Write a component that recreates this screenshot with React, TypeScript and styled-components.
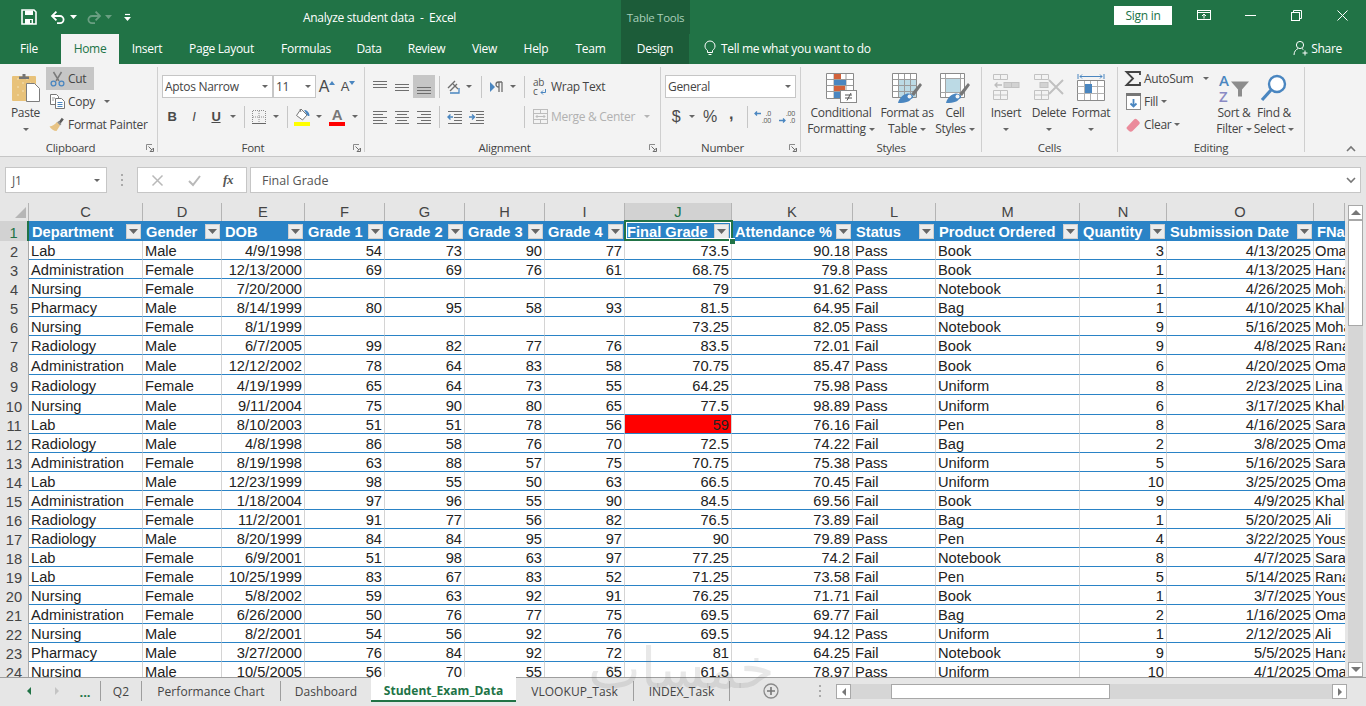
import React from "react";
import styled, { createGlobalStyle } from "styled-components";

const UI = `"Open Sans","Noto Sans",sans-serif`;
const CELL = `"Liberation Sans",Arial,sans-serif`;
const GREEN = "#217346";
const BLUE = "#4a86c0";
const GRAY = "#6e6e6e";

const Global = createGlobalStyle`
  html, body { margin: 0; padding: 0; overflow: hidden; background: #e6e6e6; }
  * { box-sizing: border-box; }
`;

const Page = styled.div`
  position: relative;
  width: 1366px;
  height: 706px;
  overflow: hidden;
  display: flex;
  flex-direction: column;
  font-family: ${UI};
  font-size: 12px;
  letter-spacing: -0.3px;
  color: #444;
  background: #e6e6e6;
`;

/* ---------- title and tabs ---------- */
const TitleRow = styled.div`
  height: 34px;
  background: ${GREEN};
  display: flex;
  align-items: center;
  color: #fff;
`;
const Qat = styled.span<{ $ml: number; $w: number }>`
  margin-left: ${(p) => p.$ml}px;
  width: ${(p) => p.$w}px;
  display: flex;
  justify-content: center;
  align-items: center;
`;
const DocTitle = styled.div`
  margin-left: 171px;
  width: 318px;
  white-space: pre;
`;
const ContextLabel = styled.div`
  width: 69px;
  height: 34px;
  background: #1c5c39;
  color: #a9cfba;
  display: flex;
  align-items: center;
  justify-content: center;
  white-space: nowrap;
  font-size: 11.5px;
`;
const SignIn = styled.div`
  margin-left: 424px;
  width: 58px;
  height: 19px;
  background: #fff;
  color: ${GREEN};
  display: flex;
  align-items: center;
  justify-content: center;
  margin-top: -3px;
`;
const WinButtons = styled.div`
  margin-left: 9px;
  display: flex;
`;
const WinBtn = styled.div`
  width: 46px;
  height: 30px;
  margin-top: -4px;
  display: flex;
  align-items: center;
  justify-content: center;
`;
const TabRow = styled.div`
  height: 30px;
  background: ${GREEN};
  display: flex;
  padding-left: 6px;
  color: #fff;
`;
const Tab = styled.div<{ $w: number; $mr?: number; $active?: boolean; $ctx?: boolean }>`
  width: ${(p) => p.$w}px;
  margin-right: ${(p) => p.$mr ?? 0}px;
  padding-bottom: 2px;
  display: flex;
  align-items: center;
  justify-content: center;
  white-space: nowrap;
  background: ${(p) => (p.$active ? "#f3f3f3" : p.$ctx ? "#1c5c39" : "transparent")};
  color: ${(p) => (p.$active ? GREEN : "#fff")};
`;
const TellMe = styled.div`
  margin-left: 15px;
  padding-bottom: 2px;
  display: flex;
  align-items: center;
  gap: 5px;
`;
const Share = styled.div`
  margin-left: auto;
  padding: 0 24px 2px 0;
  display: flex;
  align-items: center;
  gap: 2px;
`;

/* ---------- ribbon ---------- */
const Ribbon = styled.div`
  height: 93px;
  background: #f3f3f3;
  border-bottom: 1px solid #c6c6c6;
  display: flex;
  padding-top: 3px;
  position: relative;
`;
const Group = styled.div<{ $w: number }>`
  width: ${(p) => p.$w}px;
  height: 85px;
  border-right: 1px solid #cfcfcf;
  display: flex;
  flex-direction: column;
  position: relative;
`;
const GroupBody = styled.div<{ $pl?: number; $dir?: string }>`
  height: 73px;
  padding-left: ${(p) => p.$pl ?? 0}px;
  display: flex;
  flex-direction: ${(p) => p.$dir ?? "row"};
`;
const GroupLabel = styled.div<{ $launch?: boolean }>`
  height: 12px;
  line-height: 16px;
  text-align: center;
  white-space: nowrap;
  font-size: 11.5px;
  padding-right: ${(p) => (p.$launch ? 16 : 0)}px;
`;
const Launcher = styled.span`
  position: absolute;
  right: 3px;
  bottom: 0px;
  display: flex;
`;
const ToolRow = styled.div<{ $mt: number; $ml?: number; $h?: number }>`
  margin-top: ${(p) => p.$mt}px;
  margin-left: ${(p) => p.$ml ?? 0}px;
  height: ${(p) => p.$h ?? 23}px;
  display: flex;
  align-items: center;
`;
const Slot = styled.span<{ $w: number; $on?: boolean; $ml?: number }>`
  width: ${(p) => p.$w}px;
  margin-left: ${(p) => p.$ml ?? 0}px;
  height: 23px;
  flex: none;
  display: flex;
  align-items: center;
  justify-content: center;
  background: ${(p) => (p.$on ? "#c6c6c6" : "transparent")};
`;
const VSep = styled.span<{ $ml?: number; $mr?: number }>`
  width: 1px;
  height: 22px;
  flex: none;
  margin-left: ${(p) => p.$ml ?? 0}px;
  margin-right: ${(p) => p.$mr ?? 0}px;
  background: #c6c6c6;
`;
const Caret = styled.i<{ $ml?: number; $dim?: boolean }>`
  display: inline-block;
  flex: none;
  margin-left: ${(p) => p.$ml ?? 0}px;
  width: 0;
  height: 0;
  border-left: 3.5px solid transparent;
  border-right: 3.5px solid transparent;
  border-top: 3.5px solid ${(p) => (p.$dim ? "#b4b4b4" : "#666")};
`;
const Combo = styled.div<{ $w: number }>`
  width: ${(p) => p.$w}px;
  height: 23px;
  flex: none;
  background: #fff;
  border: 1px solid #c6c6c6;
  display: flex;
  align-items: center;
  padding: 0 4px 0 2px;
  justify-content: space-between;
  white-space: nowrap;
`;
const SmallColumn = styled.div<{ $w: number; $pl?: number }>`
  width: ${(p) => p.$w}px;
  padding-left: ${(p) => p.$pl ?? 0}px;
  display: flex;
  flex-direction: column;
  flex: none;
`;
const SmallBtn = styled.div<{ $on?: boolean; $w?: number }>`
  height: 23px;
  width: ${(p) => (p.$w ? `${p.$w}px` : "auto")};
  display: flex;
  align-items: center;
  white-space: nowrap;
  background: ${(p) => (p.$on ? "#c6c6c6" : "transparent")};
`;
const SmallIcon = styled.span<{ $w?: number }>`
  width: ${(p) => p.$w ?? 22}px;
  flex: none;
  display: flex;
  justify-content: center;
  align-items: center;
`;
const Large = styled.div<{ $w: number; $mr?: number }>`
  width: ${(p) => p.$w}px;
  margin-right: ${(p) => p.$mr ?? 0}px;
  flex: none;
  padding-top: 3px;
  display: flex;
  flex-direction: column;
  align-items: center;
  white-space: nowrap;
  line-height: 16px;
`;
const LargeIcon = styled.span`
  height: 35px;
  display: flex;
  align-items: center;
  justify-content: center;
`;
const LargeLine = styled.span`
  height: 16px;
  display: flex;
  align-items: center;
  gap: 3px;
`;
const FaceLetter = styled.span<{ $b?: boolean; $i?: boolean; $u?: boolean; $size?: number; $mb?: number }>`
  font-family: ${CELL};
  font-size: ${(p) => p.$size ?? 13}px;
  font-weight: ${(p) => (p.$b ? 700 : 400)};
  font-style: ${(p) => (p.$i ? "italic" : "normal")};
  text-decoration: ${(p) => (p.$u ? "underline" : "none")};
  margin-bottom: ${(p) => p.$mb ?? 0}px;
  color: #4a4a4a;
`;
const Disabled = styled.span`
  color: #b1b1b1;
  white-space: nowrap;
  margin-left: 1px;
`;
const WrapLabel = styled.span`
  margin-left: 1px;
  white-space: nowrap;
`;
const Collapse = styled.span`
  position: absolute;
  right: 10px;
  bottom: 4px;
  display: flex;
`;

/* ---------- formula bar ---------- */
const FormulaRow = styled.div`
  height: 46px;
  padding: 10px 5px 10px 5px;
  display: flex;
  align-items: stretch;
  background: #e6e6e6;
`;
const NameBox = styled.div`
  width: 102px;
  background: #fff;
  border: 1px solid #c6c6c6;
  display: flex;
  align-items: center;
  justify-content: space-between;
  padding: 0 6px 0 6px;
  color: #555;
`;
const Grip = styled.div`
  width: 30px;
  display: flex;
  align-items: center;
  justify-content: center;
`;
const FxBox = styled.div`
  width: 110px;
  background: #fff;
  border: 1px solid #c6c6c6;
  display: flex;
  align-items: center;
`;
const FxSlot = styled.span<{ $w: number }>`
  width: ${(p) => p.$w}px;
  display: flex;
  justify-content: center;
`;
const FxGlyph = styled.span`
  font-family: "Liberation Serif", serif;
  font-style: italic;
  font-weight: 700;
  font-size: 13px;
  color: #555;
`;
const FormulaInput = styled.div`
  margin-left: 3px;
  flex: 1;
  background: #fff;
  border: 1px solid #c6c6c6;
  display: flex;
  align-items: center;
  justify-content: space-between;
  padding: 0 4px 0 11px;
  font-size: 12.5px;
  letter-spacing: 0;
  color: #555;
`;

/* ---------- sheet ---------- */
const COLS = "29px 114px 79px 83px 80px 80px 80px 80px 107px 121px 83px 144px 87px 147px 31px";

const SheetArea = styled.div`
  height: 475px;
  display: flex;
  border-bottom: 1px solid #9e9e9e;
`;
const Grid = styled.div`
  width: 1345px;
  overflow: hidden;
  background: #fff;
  font-family: ${CELL};
  font-size: 14.67px;
  letter-spacing: 0;
  color: #222;
`;
const ColHeadRow = styled.div`
  height: 18px;
  display: grid;
  grid-template-columns: ${COLS};
  background: #e6e6e6;
`;
const ColHead = styled.div<{ $sel?: boolean }>`
  display: flex;
  align-items: center;
  justify-content: center;
  line-height: 18px;
  color: ${(p) => (p.$sel ? GREEN : "#444")};
  background: ${(p) => (p.$sel ? "#d2d2d2" : "transparent")};
  border-right: 1px solid #b4b4b4;
  position: relative;
  overflow: hidden;
`;
const Corner = styled.span`
  position: absolute;
  left: 15px;
  top: 4px;
  width: 0;
  height: 0;
  border-left: 11px solid transparent;
  border-bottom: 11px solid #b6b6b6;
`;
const Row = styled.div<{ $h: number }>`
  height: ${(p) => p.$h}px;
  display: grid;
  grid-template-columns: ${COLS};
`;
const RowHead = styled.div<{ $sel?: boolean }>`
  background: ${(p) => (p.$sel ? "#d2d2d2" : "#e6e6e6")};
  border-right: ${(p) => (p.$sel ? `2px solid ${GREEN}` : "1px solid #a8a8a8")};
  color: ${(p) => (p.$sel ? GREEN : "#444")};
  display: flex;
  align-items: flex-end;
  justify-content: center;
  line-height: 16px;
`;
const Cell = styled.div<{ $right?: boolean; $red?: boolean; $open?: boolean }>`
  border-right: ${(p) => (p.$open ? "none" : "1px solid #d4d4d4")};
  border-bottom: 1px solid #2a83c6;
  background: ${(p) => (p.$red ? "#ff0000" : "#fff")};
  display: flex;
  align-items: flex-end;
  justify-content: ${(p) => (p.$right ? "flex-end" : "flex-start")};
  padding: ${(p) => (p.$open ? "0 0 0 1px" : "0 2px")};
  line-height: 15px;
  white-space: nowrap;
  overflow: hidden;
`;
const HeadCell = styled.div<{ $sel?: boolean }>`
  background: #2a83c6;
  color: #fff;
  font-weight: 700;
  display: flex;
  align-items: center;
  justify-content: space-between;
  padding: ${(p) => (p.$sel ? "1px 2px 0 2px" : "1px 1px 0 3px")};
  white-space: nowrap;
  position: relative;
  overflow: ${(p) => (p.$sel ? "visible" : "hidden")};
  z-index: ${(p) => (p.$sel ? 2 : 0)};
`;
const FilterBtn = styled.span`
  width: 15px;
  height: 15px;
  flex: none;
  margin-right: 1px;
  margin-top: -1px;
  background: #ececec;
  border: 1px solid #d0d0d0;
  display: flex;
  align-items: center;
  justify-content: center;
`;
const SelectBox = styled.span`
  position: absolute;
  inset: -1px -1px 0 -1px;
  border: 2px solid ${GREEN};
  pointer-events: none;
  &::after {
    content: "";
    position: absolute;
    inset: 0;
    border: 1px solid #fff;
  }
`;
const Handle = styled.span`
  position: absolute;
  right: -3px;
  bottom: -3px;
  width: 6px;
  height: 6px;
  background: ${GREEN};
  border: 1px solid #fff;
  border-width: 1px 0 0 1px;
`;
const VScroll = styled.div`
  width: 21px;
  padding: 2px 3px 0 3px;
  display: flex;
  flex-direction: column;
  background: #e6e6e6;
`;
const ScrollBtn = styled.div`
  height: 15px;
  flex: none;
  background: #fff;
  border: 1px solid #a8a8a8;
  display: flex;
  align-items: center;
  justify-content: center;
`;
const VThumb = styled.div`
  height: 106px;
  flex: none;
  background: #fff;
  border: 1px solid #a8a8a8;
`;
const VTrack = styled.div`
  flex: 1;
  background: #d6d6d6;
`;
const ArrowUp = styled.i<{ $dir: "up" | "down" }>`
  width: 0;
  height: 0;
  border-left: 5px solid transparent;
  border-right: 5px solid transparent;
  border-${(p) => (p.$dir === "up" ? "bottom" : "top")}: 5px solid #777;
`;
const ArrowSide = styled.i<{ $dir: "left" | "right"; $color?: string; $size?: number }>`
  width: 0;
  height: 0;
  border-top: ${(p) => p.$size ?? 4}px solid transparent;
  border-bottom: ${(p) => p.$size ?? 4}px solid transparent;
  border-${(p) => (p.$dir === "left" ? "right" : "left")}: ${(p) => p.$size ?? 4}px solid ${(p) => p.$color ?? "#777"};
`;

/* ---------- sheet tabs ---------- */
const TabsBar = styled.div`
  flex: 1;
  display: flex;
  padding-left: 15px;
  background: #e6e6e6;
`;
const TabNav = styled.span<{ $w: number; $ml?: number; $h?: number }>`
  width: ${(p) => p.$w}px;
  margin-left: ${(p) => p.$ml ?? 0}px;
  height: ${(p) => p.$h ?? 26}px;
  flex: none;
  display: flex;
  align-items: center;
  justify-content: center;
  white-space: nowrap;
`;
const Dots = styled.b`
  color: ${GREEN};
  font-size: 13px;
  letter-spacing: 0;
  padding-top: 2px;
`;
const SheetSep = styled.span<{ $ml?: number }>`
  width: 1px;
  height: 20px;
  margin-top: 3px;
  flex: none;
  margin-left: ${(p) => p.$ml ?? 0}px;
  background: #9e9e9e;
`;
const SheetTab = styled.span<{ $w: number; $active?: boolean }>`
  width: ${(p) => p.$w}px;
  flex: none;
  height: ${(p) => (p.$active ? 25 : 24)}px;
  margin-top: ${(p) => (p.$active ? -1 : 0)}px;
  padding-top: ${(p) => (p.$active ? 3 : 2)}px;
  display: flex;
  align-items: center;
  justify-content: center;
  white-space: nowrap;
  letter-spacing: 0.05px;
  color: ${(p) => (p.$active ? GREEN : "#444")};
  font-weight: ${(p) => (p.$active ? 700 : 400)};
  background: ${(p) => (p.$active ? "#fff" : "transparent")};
  border-bottom: ${(p) => (p.$active ? `2px solid ${GREEN}` : "none")};
`;
const HBar = styled.div`
  margin-left: 7px;
  margin-top: 6px;
  height: 15px;
  display: flex;
`;
const HBtn = styled.div`
  width: 15px;
  background: #fff;
  border: 1px solid #a8a8a8;
  display: flex;
  align-items: center;
  justify-content: center;
`;
const HTrack = styled.div<{ $w: number }>`
  width: ${(p) => p.$w}px;
  background: #d6d6d6;
`;
const HThumb = styled.div`
  width: 219px;
  background: #fff;
  border: 1px solid #a8a8a8;
`;
const Watermark = styled.div`
  position: absolute;
  left: 588px;
  top: 636px;
  font-family: "DejaVu Sans", "Noto Sans", sans-serif;
  font-size: 56px;
  line-height: 66px;
  letter-spacing: 0;
  color: rgba(110, 110, 110, 0.16);
  pointer-events: none;
  z-index: 5;
`;

/* ---------- drawn icons ---------- */
type Sz = { w: number; h: number; children: React.ReactNode };
const Svg = ({ w, h, children }: Sz) => (
  <svg width={w} height={h} viewBox={`0 0 ${w} ${h}`} fill="none" style={{ display: "block", flex: "none", overflow: "visible" }}>
    {children}
  </svg>
);

const SaveIcon = () => (
  <Svg w={16} h={16}>
    <path d="M1 1h12l2 2v12H1z" stroke="#fff" strokeWidth="1.6" />
    <path d="M4 1.5h8V6H4z" fill="#fff" />
    <path d="M4 10h8v5H4z" fill="#fff" />
    <path d="M9 11h1.6v3H9z" fill={GREEN} />
  </Svg>
);
const UndoIcon = ({ c = "#fff" }: { c?: string }) => (
  <Svg w={15} h={15}>
    <path d="M2.5 6H10a3.6 3.6 0 0 1 0 7.2H7" stroke={c} strokeWidth="1.8" />
    <path d="M6.4 1.6 2 6l4.4 4.4" stroke={c} strokeWidth="1.8" />
  </Svg>
);
const RedoIcon = () => (
  <Svg w={15} h={15}>
    <path d="M12.5 6H5a3.6 3.6 0 0 0 0 7.2h3" stroke="#6a9f82" strokeWidth="1.8" />
    <path d="M8.6 1.6 13 6l-4.4 4.4" stroke="#6a9f82" strokeWidth="1.8" />
  </Svg>
);
const CustomizeIcon = () => (
  <Svg w={9} h={9}>
    <path d="M2 1.5h5" stroke="#fff" strokeWidth="1.2" />
    <path d="M1 4h7L4.5 8z" fill="#fff" />
  </Svg>
);
const SmallCaretWhite = ({ dim }: { dim?: boolean }) => (
  <Svg w={7} h={4}>
    <path d="M0 0h7L3.5 4z" fill={dim ? "#6a9f82" : "#fff"} />
  </Svg>
);
const DisplayOpts = () => (
  <Svg w={14} h={10}>
    <rect x=".5" y=".5" width="13" height="9" stroke="#fff" />
    <path d="M.5 2.5h13" stroke="#fff" />
    <path d="M7 8.5V4.5M5 6l2-2 2 2" stroke="#fff" />
  </Svg>
);
const MinIcon = () => (
  <Svg w={11} h={11}>
    <path d="M0 5.5h11" stroke="#fff" />
  </Svg>
);
const RestoreIcon = () => (
  <Svg w={11} h={11}>
    <rect x=".5" y="2.5" width="8" height="8" stroke="#fff" />
    <path d="M2.5 2.5v-2h8v8h-2" stroke="#fff" />
  </Svg>
);
const CloseIcon = () => (
  <Svg w={11} h={11}>
    <path d="M.5.5l10 10M10.5.5l-10 10" stroke="#fff" />
  </Svg>
);
const BulbIcon = () => (
  <Svg w={12} h={16}>
    <path d="M3.5 10.5C2 9.4 1 8 1 6a5 5 0 0 1 10 0c0 2-1 3.4-2.5 4.5v2h-5z" stroke="#fff" />
    <path d="M4.5 14.5h3" stroke="#fff" />
  </Svg>
);
const ShareIcon = () => (
  <Svg w={16} h={16}>
    <circle cx="7" cy="5" r="3.6" stroke="#fff" />
    <path d="M1 15c0-3.5 2-5.5 4-6.4M9 8.6c.5.2 1 .5 1.4.9" stroke="#fff" />
    <path d="M12 10.5v5M9.5 13h5" stroke="#fff" />
  </Svg>
);
const LauncherIcon = () => (
  <Svg w={8} h={8}>
    <path d="M.5 6V.5H6" stroke="#8a8a8a" />
    <path d="M2.5 2.5l3.5 3.5M7.5 4v3.5H4z" stroke="#6e6e6e" />
  </Svg>
);
const PasteIcon = () => (
  <Svg w={30} h={30}>
    <rect x="1" y="3" width="24" height="25" rx="1" fill="#e8c27a" />
    <path d="M6 6h2M11 10h2M6 14h2M11 18h2M6 22h2M15 6h2M19 10h1" stroke="#f6e3b8" />
    <path d="M8 6V3.5h3.5V1h3v2.5H18V6z" fill="#757575" />
    <path d="M15.5 10.5h8l5 5v13h-13z" fill="#fff" stroke="#7d7d7d" />
  </Svg>
);
const ScissorsIcon = () => (
  <Svg w={15} h={16}>
    <path d="M3.5 1l5.5 9M11.5 1L6 10" stroke="#7a7a7a" strokeWidth="1.5" />
    <circle cx="3.5" cy="12.5" r="2.4" stroke={BLUE} strokeWidth="1.3" />
    <circle cx="11.5" cy="12.5" r="2.4" stroke={BLUE} strokeWidth="1.3" />
  </Svg>
);
const CopyIcon = () => (
  <Svg w={15} h={15}>
    <path d="M.5.5h6l2 2v8H.5z" fill="#fff" stroke="#777" />
    <path d="M5.5 4.5h6l3 3v7h-9z" fill="#fff" stroke="#777" />
    <path d="M7.5 8.5h5M7.5 10.5h5M7.5 12.5h5" stroke={BLUE} />
    <path d="M2 4h3M2 6h2" stroke="#999" />
  </Svg>
);
const PainterIcon = () => (
  <Svg w={16} h={15}>
    <path d="M10 4.5l2.8-3.7 2 1.7L11.6 6.5z" fill="#5b5b5b" />
    <path d="M9.5 4l3 3-1.5 1.5-3-3z" fill="#8a8a8a" />
    <path d="M7.8 5L11 8.5 7.5 14C5 14 2 12 .5 9.5c3-.2 5.5-2 7.3-4.5z" fill="#e7c384" />
  </Svg>
);
const GrowIcon = ({ down }: { down?: boolean }) => (
  <Svg w={6} h={12}>
    <path d={down ? "M0 0h6L3 4z" : "M0 4h6L3 0z"} fill={BLUE} />
  </Svg>
);
const BorderIcon = () => (
  <Svg w={14} h={14}>
    <path d="M.5 1v12M13.5 1v12M7 1v12M1 .5h12M1 7h12" stroke="#8c8c8c" strokeDasharray="1 1" />
    <path d="M0 13.5h14" stroke="#666" />
  </Svg>
);
const FillIcon = () => (
  <Svg w={17} h={18}>
    <path d="M7 1l6 6-4.5 5L2.5 7.5z" fill="#fff" stroke="#777" />
    <path d="M7 4L6 1" stroke="#777" />
    <path d="M10 2c3 0 5 2 5.5 5 .2 1-1 1.5-2 .5z" fill={BLUE} />
    <rect x="0" y="14" width="16" height="4" fill="#ffff00" />
  </Svg>
);
const ColorA = () => (
  <Svg w={16} h={18}>
    <text x="8" y="12" textAnchor="middle" fontFamily={CELL} fontSize="15" fontWeight="700" fill="#777">
      A
    </text>
    <rect x="0" y="14" width="16" height="4" fill="#ff0000" />
  </Svg>
);
const LinesIcon = ({ l, arrow }: { l: [number, number, number][]; arrow?: "in" | "out" }) => (
  <Svg w={16} h={14}>
    {l.map(([a, b, y], i) => (
      <path key={i} d={`M${a} ${y}.5H${b}`} stroke={GRAY} />
    ))}
    {arrow === "out" && <path d="M6 7H1M3.5 4.5 1 7l2.5 2.5" stroke={BLUE} strokeWidth="1.4" />}
    {arrow === "in" && <path d="M0 7h5M3 4.5 5.5 7 3 9.5" stroke={BLUE} strokeWidth="1.4" />}
  </Svg>
);
const OrientIcon = () => (
  <Svg w={17} h={16}>
    <path d="M2 9l7-7M4 12l7-7" stroke={GRAY} strokeWidth="1.4" />
    <path d="M7 5l5 5" stroke={GRAY} strokeWidth="1.2" />
    <path d="M13 9v5H8M4 14h9" stroke={BLUE} strokeWidth="1.3" />
  </Svg>
);
const RtlIcon = () => (
  <Svg w={16} h={12}>
    <path d="M1 1l5 5-5 5z" fill={BLUE} />
    <path d="M10 11V1M13 11V1M13 1H9.5a2.5 2.5 0 0 0 0 5H10" stroke={GRAY} strokeWidth="1.3" />
  </Svg>
);
const WrapIcon = () => (
  <Svg w={14} h={18}>
    <text x="0" y="8" fontFamily={UI} fontSize="10" fill="#555">ab</text>
    <text x="0" y="17" fontFamily={UI} fontSize="10" fill="#555">c</text>
    <path d="M12.5 11v3.5H8M10 12.5l-2 2 2 2" stroke={BLUE} />
  </Svg>
);
const MergeIcon = () => (
  <Svg w={15} h={15}>
    <rect x=".5" y=".5" width="14" height="14" stroke="#bdbdbd" />
    <path d="M.5 4.5h14M.5 10.5h14M7.5.5v4M7.5 10.5v4M3 7.5h9M4.5 6 3 7.5 4.5 9M10.5 6 12 7.5 10.5 9" stroke="#bdbdbd" />
  </Svg>
);
const DecimalIcon = ({ inc }: { inc?: boolean }) => (
  <Svg w={17} h={14}>
    <path d={inc ? "M7 3.5H1M3 1.5 1 3.5l2 2" : "M1 10.5h6M5 8.5l2 2-2 2"} stroke={BLUE} strokeWidth="1.3" />
    <text x="17" y="5.5" textAnchor="end" fontFamily={UI} fontSize="7" fill="#555">{inc ? ".0" : ".00"}</text>
    <text x="17" y="13" textAnchor="end" fontFamily={UI} fontSize="7" fill="#555">{inc ? ".00" : ".0"}</text>
  </Svg>
);
const CondIcon = () => (
  <Svg w={31} h={30}>
    <path d="M.5.5h27v25H.5z" fill="#fff" stroke="#8a8a8a" />
    <path d="M.5 6.5h27M.5 12.5h27M.5 18.5h27M8 1v24M20 1v24" stroke="#9b9b9b" />
    <rect x="8" y="1" width="7" height="5" fill="#d2623b" />
    <rect x="8" y="7" width="12" height="5" fill={BLUE} />
    <rect x="8" y="13" width="11" height="5" fill="#d2623b" />
    <rect x="8" y="19" width="6" height="6" fill={BLUE} />
    <rect x="14.5" y="17.5" width="16" height="12" fill="#fff" stroke="#8a8a8a" />
    <path d="M19 22h7M19 25h7M25 20l-4 7.5" stroke="#555" />
  </Svg>
);
const Brush = () => (
  <>
    <path d="M19 21l9-11 2 2-8 11z" fill="#777" />
    <path d="M6 30c1-4 4-8 8-9 3-1 6 0 7 2 .5 2-1 3-2 3-1 2-4 4-13 4z" fill={BLUE} />
    <circle cx="17.5" cy="23.5" r="2" fill="#f3f3f3" />
  </>
);
const TableStyleIcon = () => (
  <Svg w={31} h={30}>
    <path d="M.5.5h24v24H.5z" fill="#fff" stroke="#8a8a8a" />
    <rect x="7" y="7" width="17" height="17" fill="#bcdae5" />
    <path d="M.5 6.5h24M.5 12.5h24M.5 18.5h24M6.5 1v23M12.5 1v23M18.5 1v23" stroke="#9b9b9b" />
    <Brush />
  </Svg>
);
const CellStyleIcon = () => (
  <Svg w={31} h={30}>
    <path d="M.5.5h24v24H.5z" fill="#fff" stroke="#8a8a8a" />
    <rect x="6" y="6" width="14" height="13" fill="#bcdae5" />
    <path d="M.5 5.5h24M.5 19.5h24M5.5 1v23M20.5 1v23" stroke="#a5a5a5" />
    <Brush />
  </Svg>
);
const CellsBase = () => (
  <>
    <path d="M.5.5h14v5H.5zM7.5.5v5M.5 16.5h14v9H.5zM.5 21h14M7.5 16.5v9" stroke="#c2c2c2" />
  </>
);
const InsertCells = () => (
  <Svg w={27} h={27}>
    <CellsBase />
    <rect x="11" y="8.5" width="15" height="5" fill="#d2d2d2" stroke="#c2c2c2" />
    <path d="M18.5 8.5v5" stroke="#c2c2c2" />
    <path d="M9 11H2M4.5 8.5 2 11l2.5 2.5" stroke="#bcbcbc" strokeWidth="1.3" />
  </Svg>
);
const DeleteCells = () => (
  <Svg w={31} h={27}>
    <CellsBase />
    <rect x="6" y="8.5" width="8" height="5" fill="#d2d2d2" stroke="#c2c2c2" />
    <path d="M15 6l14 14M29 6L15 20" stroke="#c0c0c0" strokeWidth="2" />
  </Svg>
);
const FormatCells = () => (
  <Svg w={29} h={30}>
    <path d="M1 1v5M27 1v5M3 3.5h22M5 1.5 3 3.5l2 2M23 1.5l2 2-2 2" stroke={BLUE} />
    <path d="M.5 7.5h27v20H.5z" fill="#fff" stroke="#8a8a8a" />
    <path d="M.5 13.5h27M.5 20.5h27M7.5 8v19M13.5 8v19M20.5 8v19" stroke="#b3b3b3" />
    <rect x="8" y="11" width="7" height="9" fill={BLUE} />
  </Svg>
);
const SigmaIcon = () => (
  <Svg w={16} h={15}>
    <path d="M15 4V1H1.5L8 7.5 1.5 14H15v-3" stroke="#444" strokeWidth="1.8" />
  </Svg>
);
const FillDown = () => (
  <Svg w={15} h={17}>
    <rect x=".5" y=".5" width="14" height="16" fill="#fff" stroke="#8a8a8a" />
    <rect x="0" y="0" width="15" height="3" fill="#777" />
    <path d="M7.5 6v8M4.5 10.5l3 3 3-3" stroke={BLUE} strokeWidth="1.8" />
  </Svg>
);
const EraserIcon = () => (
  <Svg w={14} h={14}>
    <path d="M1 9l7-7.5c1-1 2-1 3 0l2 2c1 1 1 2 0 3L6.5 13c-1 1-2.5 1-3.5 0L1 11c-.6-.6-.6-1.4 0-2z" fill="#eb8b9b" />
  </Svg>
);
const SortIcon = () => (
  <Svg w={32} h={30}>
    <text x="1" y="13" fontFamily={UI} fontWeight="600" fontSize="15" fill={BLUE}>A</text>
    <text x="1" y="29" fontFamily={UI} fontWeight="600" fontSize="15" fill="#8a8ac4">Z</text>
    <path d="M13 8.5h18l-7 8v7h-4v-7z" fill="#8c8c8c" />
  </Svg>
);
const FindIcon = () => (
  <Svg w={28} h={30}>
    <circle cx="17" cy="11" r="8" fill="#fff" stroke={BLUE} strokeWidth="2.4" />
    <path d="M11 17L2 27" stroke={BLUE} strokeWidth="3.2" />
  </Svg>
);
const ChevronUp = () => (
  <Svg w={10} h={6}>
    <path d="M1 5l4-4 4 4" stroke="#777" strokeWidth="1.6" />
  </Svg>
);
const ChevronDown = () => (
  <Svg w={10} h={6}>
    <path d="M1 1l4 4 4-4" stroke="#777" strokeWidth="1.6" />
  </Svg>
);
const GripIcon = () => (
  <Svg w={3} h={12}>
    <path d="M0 0h2v2H0zM0 5h2v2H0zM0 10h2v2H0z" fill="#aaa" />
  </Svg>
);
const CancelIcon = () => (
  <Svg w={11} h={11}>
    <path d="M.5.5l10 10M10.5.5l-10 10" stroke="#b9b9b9" strokeWidth="1.5" />
  </Svg>
);
const EnterIcon = () => (
  <Svg w={13} h={11}>
    <path d="M1 6l4 4 7-9" stroke="#b9b9b9" strokeWidth="2" />
  </Svg>
);
const PlusCircle = () => (
  <Svg w={16} h={16}>
    <circle cx="8" cy="8" r="7" stroke="#8a8a8a" strokeWidth="1.3" />
    <path d="M8 4v8M4 8h8" stroke="#777" strokeWidth="1.6" />
  </Svg>
);
const FilterArrow = () => (
  <Svg w={9} h={5}>
    <path d="M0 0h9L4.5 5z" fill="#666" />
  </Svg>
);

/* ---------- data ---------- */
type Rec = [string, string, string, string, string, string, string, string, string, string, string, string, string, string];
const rows: Rec[] = [
  ["Lab", "Male", "4/9/1998", "54", "73", "90", "77", "73.5", "90.18", "Pass", "Book", "3", "4/13/2025", "Omar"],
  ["Administration", "Female", "12/13/2000", "69", "69", "76", "61", "68.75", "79.8", "Pass", "Book", "1", "4/13/2025", "Hana"],
  ["Nursing", "Female", "7/20/2000", "", "", "", "", "79", "91.62", "Pass", "Notebook", "1", "4/26/2025", "Mohamed"],
  ["Pharmacy", "Male", "8/14/1999", "80", "95", "58", "93", "81.5", "64.95", "Fail", "Bag", "1", "4/10/2025", "Khaled"],
  ["Nursing", "Female", "8/1/1999", "", "", "", "", "73.25", "82.05", "Pass", "Notebook", "9", "5/16/2025", "Mohamed"],
  ["Radiology", "Male", "6/7/2005", "99", "82", "77", "76", "83.5", "72.01", "Fail", "Book", "9", "4/8/2025", "Rana"],
  ["Administration", "Male", "12/12/2002", "78", "64", "83", "58", "70.75", "85.47", "Pass", "Book", "6", "4/20/2025", "Omar"],
  ["Radiology", "Female", "4/19/1999", "65", "64", "73", "55", "64.25", "75.98", "Pass", "Uniform", "8", "2/23/2025", "Lina"],
  ["Nursing", "Male", "9/11/2004", "75", "90", "80", "65", "77.5", "98.89", "Pass", "Uniform", "6", "3/17/2025", "Khaled"],
  ["Lab", "Male", "8/10/2003", "51", "51", "78", "56", "59", "76.16", "Fail", "Pen", "8", "4/16/2025", "Sara"],
  ["Radiology", "Male", "4/8/1998", "86", "58", "76", "70", "72.5", "74.22", "Fail", "Bag", "2", "3/8/2025", "Omar"],
  ["Administration", "Female", "8/19/1998", "63", "88", "57", "75", "70.75", "75.38", "Pass", "Uniform", "5", "5/16/2025", "Sara"],
  ["Lab", "Male", "12/23/1999", "98", "55", "50", "63", "66.5", "70.45", "Fail", "Uniform", "10", "3/25/2025", "Omar"],
  ["Administration", "Female", "1/18/2004", "97", "96", "55", "90", "84.5", "69.56", "Fail", "Book", "9", "4/9/2025", "Khaled"],
  ["Radiology", "Female", "11/2/2001", "91", "77", "56", "82", "76.5", "73.89", "Fail", "Bag", "1", "5/20/2025", "Ali"],
  ["Radiology", "Male", "8/20/1999", "84", "84", "95", "97", "90", "79.89", "Pass", "Pen", "4", "3/22/2025", "Youssef"],
  ["Lab", "Female", "6/9/2001", "51", "98", "63", "97", "77.25", "74.2", "Fail", "Notebook", "8", "4/7/2025", "Sara"],
  ["Lab", "Female", "10/25/1999", "83", "67", "83", "52", "71.25", "73.58", "Fail", "Pen", "5", "5/14/2025", "Rana"],
  ["Nursing", "Female", "5/8/2002", "59", "63", "92", "91", "76.25", "71.71", "Fail", "Book", "1", "3/7/2025", "Youssef"],
  ["Administration", "Female", "6/26/2000", "50", "76", "77", "75", "69.5", "69.77", "Fail", "Bag", "2", "1/16/2025", "Omar"],
  ["Nursing", "Male", "8/2/2001", "54", "56", "92", "76", "69.5", "94.12", "Pass", "Uniform", "1", "2/12/2025", "Ali"],
  ["Pharmacy", "Male", "3/27/2000", "76", "84", "92", "72", "81", "64.25", "Fail", "Notebook", "9", "5/5/2025", "Hana"],
  ["Nursing", "Male", "10/5/2005", "56", "70", "55", "65", "61.5", "78.97", "Pass", "Uniform", "10", "4/1/2025", "Omar"],
];
const letters = ["C", "D", "E", "F", "G", "H", "I", "J", "K", "L", "M", "N", "O", ""];
const headers = ["Department", "Gender", "DOB", "Grade 1", "Grade 2", "Grade 3", "Grade 4", "Final Grade", "Attendance %", "Status", "Product Ordered", "Quantity", "Submission Date", "FName"];
const rightCols = new Set([2, 3, 4, 5, 6, 7, 8, 11, 12]);

const heightOf = (rowNo: number) => (rowNo === 8 || rowNo === 9 || rowNo === 10 ? 20 : 19);

const alignLines: Record<string, [number, number, number][]> = {
  top: [[1, 15, 1], [1, 15, 4], [1, 15, 7]],
  mid: [[1, 15, 4], [1, 15, 7], [1, 15, 10]],
  bot: [[1, 15, 7], [1, 15, 10], [1, 15, 13]],
  left: [[1, 15, 1], [1, 11, 4], [1, 15, 7], [1, 11, 10], [1, 15, 13]],
  center: [[1, 15, 1], [3, 13, 4], [1, 15, 7], [3, 13, 10], [1, 15, 13]],
  right: [[1, 15, 1], [5, 15, 4], [1, 15, 7], [5, 15, 10], [1, 15, 13]],
  ind: [[1, 15, 1], [7, 15, 4], [7, 15, 7], [7, 15, 10], [1, 15, 13]],
};

export default function App() {
  return (
    <Page>
      <Global />
      <TitleRow>
        <Qat $ml={21} $w={16}><SaveIcon /></Qat>
        <Qat $ml={13} $w={15}><UndoIcon /></Qat>
        <Qat $ml={4} $w={8}><SmallCaretWhite /></Qat>
        <Qat $ml={9} $w={16}><RedoIcon /></Qat>
        <Qat $ml={2} $w={8}><SmallCaretWhite dim /></Qat>
        <Qat $ml={11} $w={9}><CustomizeIcon /></Qat>
        <DocTitle>Analyze student data  -  Excel</DocTitle>
        <ContextLabel>Table Tools</ContextLabel>
        <SignIn>Sign in</SignIn>
        <WinButtons>
          <WinBtn><DisplayOpts /></WinBtn>
          <WinBtn><MinIcon /></WinBtn>
          <WinBtn><RestoreIcon /></WinBtn>
          <WinBtn><CloseIcon /></WinBtn>
        </WinButtons>
      </TitleRow>

      <TabRow>
        <Tab $w={46} $mr={9}>File</Tab>
        <Tab $w={58} $active>Home</Tab>
        <Tab $w={56}>Insert</Tab>
        <Tab $w={93}>Page Layout</Tab>
        <Tab $w={76}>Formulas</Tab>
        <Tab $w={50}>Data</Tab>
        <Tab $w={65}>Review</Tab>
        <Tab $w={51}>View</Tab>
        <Tab $w={52}>Help</Tab>
        <Tab $w={57} $mr={2}>Team</Tab>
        <Tab $w={68} $ctx>Design</Tab>
        <TellMe><BulbIcon /><span>Tell me what you want to do</span></TellMe>
        <Share><ShareIcon /><span>Share</span></Share>
      </TabRow>

      <Ribbon>
        <Group $w={158}>
          <GroupBody>
            <Large $w={51} $mr={-5}>
              <LargeIcon><PasteIcon /></LargeIcon>
              <LargeLine>Paste</LargeLine>
              <LargeLine><Caret /></LargeLine>
            </Large>
            <SmallColumn $w={110}>
              <SmallBtn $on $w={48}><SmallIcon><ScissorsIcon /></SmallIcon>Cut</SmallBtn>
              <SmallBtn><SmallIcon><CopyIcon /></SmallIcon>Copy<Caret $ml={9} /></SmallBtn>
              <SmallBtn><SmallIcon><PainterIcon /></SmallIcon>Format Painter</SmallBtn>
            </SmallColumn>
          </GroupBody>
          <GroupLabel $launch>Clipboard</GroupLabel>
          <Launcher><LauncherIcon /></Launcher>
        </Group>

        <Group $w={207}>
          <GroupBody $pl={4} $dir="column">
            <ToolRow $mt={8}>
              <Combo $w={111}>Aptos Narrow<Caret /></Combo>
              <Combo $w={43}>11<Caret /></Combo>
              <Slot $w={22}><FaceLetter $size={16}>A</FaceLetter><GrowIcon /></Slot>
              <Slot $w={20}><FaceLetter $size={13}>A</FaceLetter><GrowIcon down /></Slot>
            </ToolRow>
            <ToolRow $mt={7} $ml={-1}>
              <Slot $w={22}><FaceLetter $b>B</FaceLetter></Slot>
              <Slot $w={22}><FaceLetter $i>I</FaceLetter></Slot>
              <Slot $w={22}><FaceLetter $b $u>U</FaceLetter></Slot>
              <Slot $w={12}><Caret /></Slot>
              <VSep $ml={5} $mr={2} />
              <Slot $w={24}><BorderIcon /></Slot>
              <Slot $w={10}><Caret /></Slot>
              <VSep $ml={6} $mr={2} />
              <Slot $w={24}><FillIcon /></Slot>
              <Slot $w={10}><Caret /></Slot>
              <Slot $w={26}><ColorA /></Slot>
              <Slot $w={10}><Caret /></Slot>
            </ToolRow>
          </GroupBody>
          <GroupLabel $launch>Font</GroupLabel>
          <Launcher><LauncherIcon /></Launcher>
        </Group>

        <Group $w={296}>
          <GroupBody $pl={4} $dir="column">
            <ToolRow $mt={8}>
              <Slot $w={22}><LinesIcon l={alignLines.top} /></Slot>
              <Slot $w={22}><LinesIcon l={alignLines.mid} /></Slot>
              <Slot $w={22} $on><LinesIcon l={alignLines.bot} /></Slot>
              <VSep $ml={4} $mr={4} />
              <Slot $w={20}><OrientIcon /></Slot>
              <Slot $w={10}><Caret /></Slot>
              <VSep $ml={7} $mr={5} />
              <Slot $w={20}><RtlIcon /></Slot>
              <Slot $w={12}><Caret /></Slot>
              <VSep $ml={5} $mr={5} />
              <Slot $w={20}><WrapIcon /></Slot>
              <WrapLabel>Wrap Text</WrapLabel>
            </ToolRow>
            <ToolRow $mt={7}>
              <Slot $w={22}><LinesIcon l={alignLines.left} /></Slot>
              <Slot $w={22}><LinesIcon l={alignLines.center} /></Slot>
              <Slot $w={22}><LinesIcon l={alignLines.right} /></Slot>
              <VSep $ml={4} $mr={4} />
              <Slot $w={22}><LinesIcon l={alignLines.ind} arrow="out" /></Slot>
              <Slot $w={22}><LinesIcon l={alignLines.ind} arrow="in" /></Slot>
              <VSep $ml={36} $mr={5} />
              <Slot $w={20}><MergeIcon /></Slot>
              <Disabled>Merge &amp; Center</Disabled>
              <Caret $dim $ml={9} />
            </ToolRow>
          </GroupBody>
          <GroupLabel $launch>Alignment</GroupLabel>
          <Launcher><LauncherIcon /></Launcher>
        </Group>

        <Group $w={140}>
          <GroupBody $pl={4} $dir="column">
            <ToolRow $mt={8}>
              <Combo $w={131}>General<Caret /></Combo>
            </ToolRow>
            <ToolRow $mt={7}>
              <Slot $w={22}><FaceLetter $size={16}>$</FaceLetter></Slot>
              <Slot $w={10}><Caret /></Slot>
              <Slot $w={26}><FaceLetter $size={16}>%</FaceLetter></Slot>
              <Slot $w={16}><FaceLetter $size={16} $b $mb={5}>,</FaceLetter></Slot>
              <VSep $ml={8} $mr={1} />
              <Slot $w={26}><DecimalIcon inc /></Slot>
              <Slot $w={22}><DecimalIcon /></Slot>
            </ToolRow>
          </GroupBody>
          <GroupLabel $launch>Number</GroupLabel>
          <Launcher><LauncherIcon /></Launcher>
        </Group>

        <Group $w={181}>
          <GroupBody $pl={4}>
            <Large $w={72}>
              <LargeIcon><CondIcon /></LargeIcon>
              <LargeLine>Conditional</LargeLine>
              <LargeLine>Formatting<Caret /></LargeLine>
            </Large>
            <Large $w={60} $mr={4}>
              <LargeIcon><TableStyleIcon /></LargeIcon>
              <LargeLine>Format as</LargeLine>
              <LargeLine>Table<Caret /></LargeLine>
            </Large>
            <Large $w={28}>
              <LargeIcon><CellStyleIcon /></LargeIcon>
              <LargeLine>Cell</LargeLine>
              <LargeLine>Styles<Caret /></LargeLine>
            </Large>
          </GroupBody>
          <GroupLabel>Styles</GroupLabel>
        </Group>

        <Group $w={136}>
          <GroupBody $pl={1}>
            <Large $w={46}>
              <LargeIcon><InsertCells /></LargeIcon>
              <LargeLine>Insert</LargeLine>
              <LargeLine><Caret /></LargeLine>
            </Large>
            <Large $w={40}>
              <LargeIcon><DeleteCells /></LargeIcon>
              <LargeLine>Delete</LargeLine>
              <LargeLine><Caret /></LargeLine>
            </Large>
            <Large $w={44}>
              <LargeIcon><FormatCells /></LargeIcon>
              <LargeLine>Format</LargeLine>
              <LargeLine><Caret /></LargeLine>
            </Large>
          </GroupBody>
          <GroupLabel>Cells</GroupLabel>
        </Group>

        <Group $w={187}>
          <GroupBody>
            <SmallColumn $w={96} $pl={4}>
              <SmallBtn><SmallIcon><SigmaIcon /></SmallIcon>AutoSum<Caret $ml={10} /></SmallBtn>
              <SmallBtn><SmallIcon><FillDown /></SmallIcon>Fill<Caret $ml={3} /></SmallBtn>
              <SmallBtn><SmallIcon><EraserIcon /></SmallIcon>Clear<Caret $ml={3} /></SmallBtn>
            </SmallColumn>
            <Large $w={40}>
              <LargeIcon><SortIcon /></LargeIcon>
              <LargeLine>Sort &amp;</LargeLine>
              <LargeLine>Filter<Caret /></LargeLine>
            </Large>
            <Large $w={40}>
              <LargeIcon><FindIcon /></LargeIcon>
              <LargeLine>Find &amp;</LargeLine>
              <LargeLine>Select<Caret /></LargeLine>
            </Large>
          </GroupBody>
          <GroupLabel>Editing</GroupLabel>
        </Group>
        <Collapse><ChevronUp /></Collapse>
      </Ribbon>

      <FormulaRow>
        <NameBox>J1<Caret /></NameBox>
        <Grip><GripIcon /></Grip>
        <FxBox>
          <FxSlot $w={38}><CancelIcon /></FxSlot>
          <FxSlot $w={36}><EnterIcon /></FxSlot>
          <FxSlot $w={32}><FxGlyph>fx</FxGlyph></FxSlot>
        </FxBox>
        <FormulaInput>Final Grade<ChevronDown /></FormulaInput>
      </FormulaRow>

      <SheetArea>
        <Grid>
          <ColHeadRow>
            <ColHead><Corner /></ColHead>
            {letters.map((l, i) => (
              <ColHead key={i} $sel={l === "J"}>{l}</ColHead>
            ))}
          </ColHeadRow>
          <Row $h={20}>
            <RowHead $sel>1</RowHead>
            {headers.map((h, i) => (
              <HeadCell key={h} $sel={h === "Final Grade"}>
                <span>{h}</span>
                {i < 13 && <FilterBtn><FilterArrow /></FilterBtn>}
                {h === "Final Grade" && <SelectBox />}
                {h === "Final Grade" && <Handle />}
              </HeadCell>
            ))}
          </Row>
          {rows.map((r, ri) => {
            const n = ri + 2;
            return (
              <Row key={n} $h={heightOf(n)}>
                <RowHead>{n}</RowHead>
                {r.map((v, ci) => (
                  <Cell key={ci} $right={rightCols.has(ci)} $red={n === 11 && ci === 7} $open={ci === 13}>{v}</Cell>
                ))}
              </Row>
            );
          })}
        </Grid>
        <VScroll>
          <ScrollBtn><ArrowUp $dir="up" /></ScrollBtn>
          <VThumb />
          <VTrack />
          <ScrollBtn><ArrowUp $dir="down" /></ScrollBtn>
        </VScroll>
      </SheetArea>

      <TabsBar>
        <TabNav $w={28}><ArrowSide $dir="left" $color={GREEN} /></TabNav>
        <TabNav $w={28}><ArrowSide $dir="right" $color="#c4c4c4" /></TabNav>
        <TabNav $w={28}><Dots>...</Dots></TabNav>
        <SheetSep $ml={1} />
        <SheetTab $w={40}>Q2</SheetTab>
        <SheetSep />
        <SheetTab $w={138}>Performance Chart</SheetTab>
        <SheetSep />
        <SheetTab $w={90}>Dashboard</SheetTab>
        <SheetTab $w={145} $active>Student_Exam_Data</SheetTab>
        <SheetTab $w={117}>VLOOKUP_Task</SheetTab>
        <SheetSep />
        <SheetTab $w={95}>INDEX_Task</SheetTab>
        <SheetSep />
        <TabNav $w={18} $ml={32}><PlusCircle /></TabNav>
        <TabNav $w={18} $ml={31}><GripIcon /></TabNav>
        <HBar>
          <HBtn><ArrowSide $dir="left" /></HBtn>
          <HTrack $w={40} />
          <HThumb />
          <HTrack $w={222} />
          <HBtn><ArrowSide $dir="right" /></HBtn>
        </HBar>
      </TabsBar>
      <Watermark lang="ar" dir="rtl">خمسات</Watermark>
    </Page>
  );
}
